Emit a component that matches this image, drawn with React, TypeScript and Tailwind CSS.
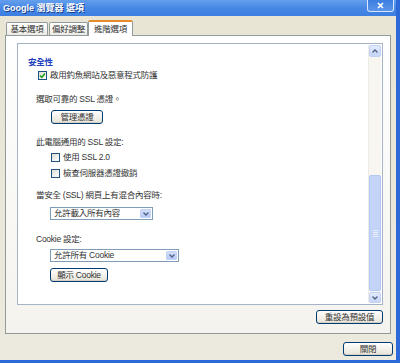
import React from "react";

const FONT = { fontFamily: '"Liberation Sans", "Noto Sans CJK TC", sans-serif' };

function Check({ checked }: { checked?: boolean }) {
  return (
    <span className="w-[9px] h-[9px] border border-[#1c5180] bg-gradient-to-br from-[#dcdcd5] to-white flex items-center justify-center shrink-0">
      {checked && (
        <svg width="7" height="7" viewBox="0 0 7 7">
          <path d="M1 3.5 L2.8 5.3 L6 1.5" stroke="#21a121" strokeWidth="1.6" fill="none" />
        </svg>
      )}
    </span>
  );
}

function Btn({ w, children }: { w: string; children: React.ReactNode }) {
  return (
    <div
      className={`${w} h-[14px] border border-[#003c74] rounded-[3px] bg-gradient-to-b from-white to-[#e6e3d6] flex items-center justify-center text-[8.5px] tracking-[-0.25px] leading-none text-[#333] shadow-[inset_0_-1px_0_#d6d0c5]`}
    >
      {children}
    </div>
  );
}

function Chevron() {
  return (
    <svg width="6" height="4" viewBox="0 0 6 4">
      <path d="M0.5 0.5 L3 3 L5.5 0.5" stroke="#4d6185" strokeWidth="1.3" fill="none" />
    </svg>
  );
}

function ChevronUp() {
  return (
    <svg width="6" height="4" viewBox="0 0 6 4">
      <path d="M0.5 3.5 L3 1 L5.5 3.5" stroke="#4d6185" strokeWidth="1.3" fill="none" />
    </svg>
  );
}

function Select({ w, children }: { w: string; children: React.ReactNode }) {
  return (
    <div className={`${w} h-[13px] border border-[#7f9db9] bg-white flex items-center p-[1px]`}>
      <span className="flex-1 pl-[2px] text-[8.5px] tracking-[-0.25px] leading-none text-[#333]">{children}</span>
      <span className="w-[11px] h-full rounded-[1px] bg-gradient-to-b from-[#d3def9] to-[#b6c9f6] border border-[#c2d2f5] flex items-center justify-center">
        <Chevron />
      </span>
    </div>
  );
}

export default function App() {
  return (
    <div
      className="w-[400px] h-[363px] flex flex-col bg-[#ece9d8] border-r-[4px] border-b-[3px] border-[#2d69d8] overflow-hidden"
      style={FONT}
    >
      {/* Title bar */}
      <div className="h-[16px] shrink-0 flex items-start justify-between pl-[3px] pr-[2px] bg-gradient-to-b from-[#649fec] via-[#4788e6] to-[#3c7fe0]">
        <span className="text-[9px] font-bold text-white leading-none mt-[4px] [text-shadow:1px_1px_0_#1a3f8c]">
          Google 瀏覽器 選項
        </span>
        <span className="w-[27px] h-[12px] border border-white/80 border-t-0 rounded-b-[3px] bg-gradient-to-b from-[#3d7de0] to-[#5a95ea] flex items-center justify-center">
          <svg width="7" height="7" viewBox="0 0 7 7">
            <path d="M1 1 L6 6 M6 1 L1 6" stroke="white" strokeWidth="1.6" />
          </svg>
        </span>
      </div>

      {/* Body */}
      <div className="flex-1 flex flex-col pl-[5px] pr-[5px] pt-[4px] bg-gradient-to-b from-[#e8e5d5] to-[#eceade]">
        {/* Tabs */}
        <div className="h-[15px] flex items-end pl-[1px] relative z-10 text-[8.5px] tracking-[-0.25px] leading-none text-[#333]">
          <div className="h-[13px] w-[42px] border border-b-0 border-[#919b9c] rounded-t-[2px] bg-gradient-to-b from-white to-[#ecebe5] flex items-center justify-center">
            基本選項
          </div>
          <div className="h-[13px] w-[39px] ml-[1px] border border-b-0 border-[#919b9c] rounded-t-[2px] bg-gradient-to-b from-white to-[#ecebe5] flex items-center justify-center">
            偏好調整
          </div>
          <div className="h-[16px] w-[45px] -mb-[1px] border-x border-[#919b9c] border-t-2 border-t-[#e68b2c] rounded-t-[2px] bg-white flex items-center justify-center">
            進階選項
          </div>
        </div>

        {/* Panel */}
        <div className="h-[299px] border border-[#919b9c] bg-gradient-to-b from-white to-[#f4f3ee] pl-[11px] pr-[7px] pt-[7px] flex flex-col">
          {/* Scroll area */}
          <div className="h-[262px] border border-[#a5b3c8] bg-white flex p-[1px]">
            <div className="flex-1 flex flex-col pl-[9px] text-[8.5px] tracking-[-0.25px] leading-[12px] text-[#333]">
              <div className="mt-[11px] font-bold text-[#1f3fbf]">安全性</div>
              <div className="mt-[1px] pl-[10px] flex items-center gap-[3px]">
                <Check checked />
                <span>啟用釣魚網站及惡意程式防護</span>
              </div>
              <div className="mt-[12px] pl-[8px]">選取可靠的 SSL 憑證。</div>
              <div className="mt-[5px] pl-[23px]">
                <Btn w="w-[52px]">管理憑證</Btn>
              </div>
              <div className="mt-[12px] pl-[8px]">此電腦通用的 SSL 設定:</div>
              <div className="mt-[3px] pl-[23px] flex items-center gap-[3px]">
                <Check />
                <span>使用 SSL 2.0</span>
              </div>
              <div className="mt-[4px] pl-[23px] flex items-center gap-[3px]">
                <Check />
                <span>檢查伺服器憑證撤銷</span>
              </div>
              <div className="mt-[10px] pl-[8px]">當安全 (SSL) 網頁上有混合內容時:</div>
              <div className="mt-[6px] pl-[22px]">
                <Select w="w-[103px]">允許載入所有內容</Select>
              </div>
              <div className="mt-[13px] pl-[8px]">Cookie 設定:</div>
              <div className="mt-[4px] pl-[22px]">
                <Select w="w-[129px]">允許所有 Cookie</Select>
              </div>
              <div className="mt-[6px] pl-[22px]">
                <Btn w="w-[58px]">顯示 Cookie</Btn>
              </div>
            </div>
            {/* Scrollbar */}
            <div className="w-[13px] flex flex-col bg-[#f7f6f1] border-l border-[#eeede5]">
              <div className="h-[12px] border border-[#c2d2f5] rounded-[2px] bg-gradient-to-b from-[#e2eafc] to-[#c5d5f8] flex items-center justify-center">
                <ChevronUp />
              </div>
              <div className="flex-1 flex flex-col justify-end pb-[1px]">
                <div className="h-[116px] border border-[#b4c8f6] rounded-[2px] bg-[#c4d4f9] flex flex-col items-center justify-center gap-[1px]">
                  <span className="w-[5px] h-[1px] bg-[#e8eefc]" />
                  <span className="w-[5px] h-[1px] bg-[#e8eefc]" />
                  <span className="w-[5px] h-[1px] bg-[#e8eefc]" />
                  <span className="w-[5px] h-[1px] bg-[#e8eefc]" />
                </div>
              </div>
              <div className="h-[11px] border border-[#c2d2f5] rounded-[2px] bg-gradient-to-b from-[#e2eafc] to-[#c5d5f8] flex items-center justify-center">
                <Chevron />
              </div>
            </div>
          </div>
          <div className="mt-[5px] flex justify-end">
            <Btn w="w-[67px]">重設為預設值</Btn>
          </div>
        </div>

        {/* Close */}
        <div className="mt-[8px] flex justify-end mr-[-2px]">
          <Btn w="w-[50px]">關閉</Btn>
        </div>
      </div>
    </div>
  );
}
